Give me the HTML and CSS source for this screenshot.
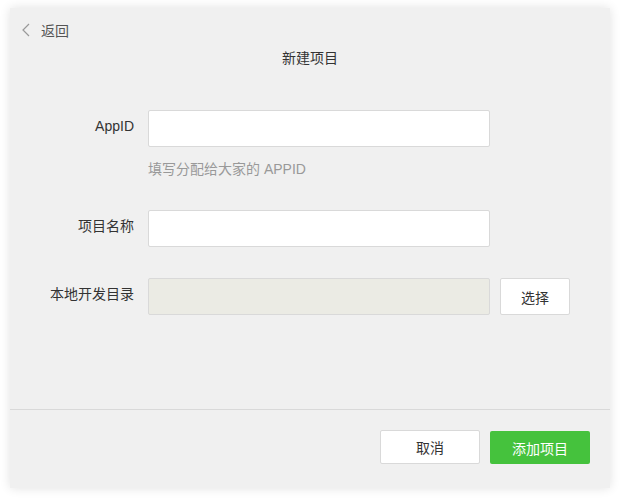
FILE: index.html
```html
<!DOCTYPE html>
<html lang="zh-CN">
<head>
  <meta charset="UTF-8" />
  <meta name="viewport" content="width=device-width, initial-scale=1.0"/>
  <title>新建项目</title>
  <link rel="stylesheet" href="styles.css">
</head>
<body>

  <div class="panel">
    <div class="header">
      <a class="back" href="#">
        <svg width="10" height="14" viewBox="0 0 10 14">
          <path d="M8 1 L2 7 L8 13" fill="none" stroke="#999" stroke-width="1.2"/>
        </svg>
        <span>返回</span>
      </a>
      <div class="title">新建项目</div>
    </div>

    <div class="form">
      <div class="row">
        <label class="label">AppID</label>
        <div class="field">
          <input type="text" class="input">
          <div class="hint">填写分配给大家的 APPID</div>
        </div>
      </div>

      <div class="row">
        <label class="label">项目名称</label>
        <div class="field">
          <input type="text" class="input">
        </div>
      </div>

      <div class="row">
        <label class="label">本地开发目录</label>
        <div class="field inline">
          <input type="text" class="input" disabled>
          <button class="btn btn-pick">选择</button>
        </div>
      </div>
    </div>

    <div class="footer">
      <button class="btn btn-cancel">取消</button>
      <button class="btn btn-primary">添加项目</button>
    </div>
  </div>

</body>
</html>
```

FILE: styles.css
```css
* {
  box-sizing: border-box;
}

body {
  margin: 0;
  padding: 8px 10px 12px;
  background: #fff;
  font-family: "Liberation Sans", "Noto Sans CJK SC", sans-serif;
  font-size: 14px;
  color: #333;
}

.panel {
  width: 600px;
  height: 480px;
  background: #f0f0f0;
  box-shadow: 0 0 10px rgba(0, 0, 0, 0.12);
  display: flex;
  flex-direction: column;
}

.header {
  padding-top: 14px;
}

.back {
  display: flex;
  align-items: center;
  gap: 10px;
  margin-left: 11px;
  height: 16px;
  color: #555;
  text-decoration: none;
}

.title {
  text-align: center;
  line-height: 20px;
  margin-top: 10px;
}

.form {
  flex: 1;
  padding-top: 42px;
}

.row {
  display: flex;
  align-items: flex-start;
  margin-bottom: 31px;
}

.label {
  width: 124px;
  margin-right: 14px;
  text-align: right;
  line-height: 32px;
}

.field.inline {
  display: flex;
  gap: 10px;
}

.input {
  width: 342px;
  height: 37px;
  border: 1px solid #d9d9d9;
  border-radius: 2px;
  background: #fff;
  padding: 0 10px;
  font: inherit;
  outline: none;
}

.input:disabled {
  background: #ebebe4;
}

.hint {
  margin-top: 12px;
  line-height: 20px;
  color: #999;
}

.btn {
  font: inherit;
  border-radius: 2px;
  cursor: pointer;
}

.btn-pick {
  width: 70px;
  height: 37px;
  background: #fff;
  border: 1px solid #d9d9d9;
  color: #333;
}

.footer {
  border-top: 1px solid #d9d9d9;
  padding: 20px 20px 24px;
  display: flex;
  justify-content: flex-end;
  gap: 10px;
}

.btn-cancel {
  width: 100px;
  height: 34px;
  background: #fff;
  border: 1px solid #d9d9d9;
  color: #333;
}

.btn-primary {
  width: 100px;
  height: 33px;
  margin-top: 1px;
  background: #45c23d;
  border: none;
  color: #fff;
}
```
